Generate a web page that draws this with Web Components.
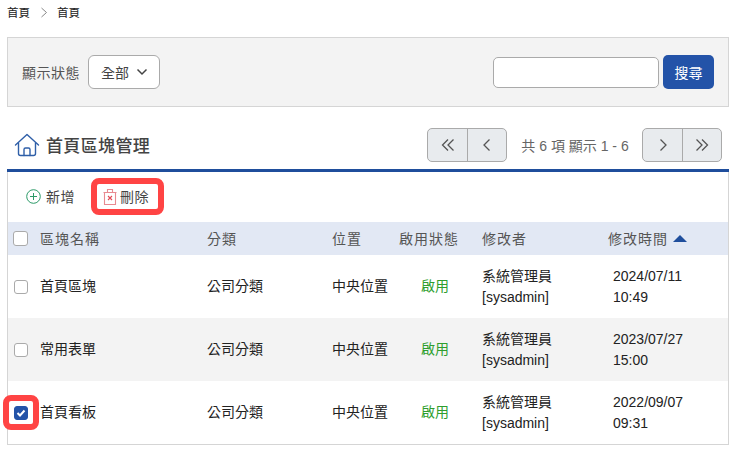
<!DOCTYPE html>
<html lang="zh-Hant">
<head>
<meta charset="utf-8">
<title>首頁區塊管理</title>
<style>
  body {
    margin: 0;
    padding: 0 6px 0 7px;
    background: #fff;
    color: #333;
    font-family: "Liberation Sans", "Noto Sans CJK TC", sans-serif;
    font-size: 14px;
  }
</style>
</head>
<body>
<bread-crumb></bread-crumb>
<filter-panel></filter-panel>
<title-bar></title-bar>
<block-table>
  <block-row name="首頁區塊" user="系統管理員" date="2024/07/11" time="10:49"></block-row>
  <block-row name="常用表單" user="系統管理員" date="2023/07/27" time="15:00" shaded></block-row>
  <block-row name="首頁看板" user="系統管理員" date="2022/09/07" time="09:31" checked></block-row>
</block-table>

<script>
class BreadCrumb extends HTMLElement {
  constructor() {
    super();
    this.attachShadow({ mode: 'open' }).innerHTML = `
      <style>
        :host { display: flex; align-items: center; height: 37px; padding-bottom: 13px; box-sizing: border-box; font-size: 11.5px; color: #222; }
        svg { margin: 0 9px 0 10px; }
      </style>
      <span>首頁</span>
      <svg width="8" height="11" viewBox="0 0 8 11" fill="none" stroke="#888" stroke-width="1"><path d="M1.5 1l5 4.5-5 4.5"/></svg>
      <span>首頁</span>`;
  }
}

class FilterPanel extends HTMLElement {
  constructor() {
    super();
    this.attachShadow({ mode: 'open' }).innerHTML = `
      <style>
        :host { display: flex; align-items: center; height: 70px; box-sizing: border-box; padding: 0 14px 0 14px; background: #f3f3f3; border: 1px solid #d5d5d5; }
        .label { color: #555; margin-right: 8px; letter-spacing: .5px; }
        .select { display: flex; align-items: center; width: 72px; height: 34px; box-sizing: border-box; padding-left: 12px; background: #fff; border: 1px solid #aaa; border-radius: 6px; color: #444; }
        .select svg { margin-left: 7px; }
        .input { width: 166px; height: 31px; box-sizing: border-box; margin-left: auto; background: #fff; border: 1px solid #aaa; border-radius: 5px; }
        .btn { display: flex; align-items: center; justify-content: center; width: 51px; height: 34px; margin-left: 4px; background: #2353a8; color: #fff; border-radius: 5px; }
      </style>
      <span class="label">顯示狀態</span>
      <div class="select"><span>全部</span>
        <svg width="12" height="8" viewBox="0 0 12 8" fill="none" stroke="#444" stroke-width="1.5"><path d="M1.5 1.5L6 6l4.5-4.5"/></svg>
      </div>
      <div class="input"></div>
      <div class="btn">搜尋</div>`;
  }
}

class PagerBar extends HTMLElement {
  constructor() {
    super();
    const chev = (d) => `<svg width="14" height="14" viewBox="0 0 14 14" fill="none" stroke="#555" stroke-width="1.3"><path d="${d}"/></svg>`;
    this.attachShadow({ mode: 'open' }).innerHTML = `
      <style>
        :host { display: flex; align-items: center; font-size: 14px; color: #666; }
        .group { display: flex; width: 80px; height: 34px; box-sizing: border-box; background: #e8ebee; border: 1px solid #aaa; border-radius: 5px; overflow: hidden; }
        .group div { display: flex; flex: 1; align-items: center; justify-content: center; }
        .group div:first-child { flex: none; width: 39px; }
        .group div + div { border-left: 1px solid #aaa; }
        .info { width: 134px; padding-left: 1px; text-align: center; }
      </style>
      <div class="group">
        <div>${chev('M7 1.5L1.5 7 7 12.5M12.5 1.5L7 7l5.5 5.5')}</div>
        <div>${chev('M9.5 1.5L4 7l5.5 5.5')}</div>
      </div>
      <span class="info">共 6 項 顯示 1 - 6</span>
      <div class="group">
        <div>${chev('M4.5 1.5L10 7l-5.5 5.5')}</div>
        <div>${chev('M1.5 1.5L7 7l-5.5 5.5M7 1.5L12.5 7 7 12.5')}</div>
      </div>`;
  }
}

class TitleBar extends HTMLElement {
  constructor() {
    super();
    this.attachShadow({ mode: 'open' }).innerHTML = `
      <style>
        :host { display: flex; align-items: center; height: 65px; box-sizing: border-box; padding: 13px 7px 0 7px; border-bottom: 3px solid #1f4e9c; }
        svg { margin-right: 6px; }
        h1 { margin: 0; font-size: 17px; font-weight: 500; color: #444; letter-spacing: .35px; }
        pager-bar { margin-left: auto; }
      </style>
      <svg width="26" height="24" viewBox="0 0 26 24" fill="none" stroke="#2f5fa8" stroke-width="1.4" stroke-linejoin="round" stroke-linecap="round">
        <path d="M1.5 12L13 1.5 24.5 12"/>
        <path d="M4.5 10v10.5a2 2 0 0 0 2 2h13a2 2 0 0 0 2-2V10"/>
        <path d="M10 22.5v-6a1.5 1.5 0 0 1 1.5-1.5h3a1.5 1.5 0 0 1 1.5 1.5v6"/>
      </svg>
      <h1>首頁區塊管理</h1>
      <pager-bar></pager-bar>`;
  }
}

class CheckMark extends HTMLElement {
  constructor() {
    super();
    this.attachShadow({ mode: 'open' }).innerHTML = `
      <style>
        :host { display: inline-flex; align-items: center; justify-content: center; width: 14px; height: 14px; box-sizing: border-box; background: #fff; border: 1px solid #aaa; border-radius: 3px; }
        :host([checked]) { background: #2353a8; border-color: #2353a8; }
        :host([large]) { width: 15px; height: 15px; }
        svg { display: none; }
        :host([checked]) svg { display: block; }
      </style>
      <svg width="10" height="8" viewBox="0 0 10 8" fill="none" stroke="#fff" stroke-width="2"><path d="M1.5 4l2.5 2.5 4.5-5"/></svg>`;
  }
}

class BlockTable extends HTMLElement {
  constructor() {
    super();
    this.attachShadow({ mode: 'open' }).innerHTML = `
      <style>
        :host { display: block; box-sizing: border-box; border: 1px solid #d5d5d5; border-top: 0; }
        .tools { display: flex; align-items: center; height: 50px; box-sizing: border-box; padding: 0 0 2px 18px; color: #444; font-size: 14px; letter-spacing: .5px; }
        .tool { display: flex; align-items: center; }
        .add svg { margin-right: 5px; }
        .del { position: relative; margin-left: 28px; }
        .del svg { margin-right: 3px; }
        .del::after { content: ""; position: absolute; left: -12px; right: -15px; top: -8px; bottom: -9px; border: 6px solid #ff4444; border-radius: 8px; }
        .head { display: grid; grid-template-columns: 32px 167px 125px 67px 83px 126px 1fr; align-items: center; height: 33px; padding-bottom: 1px; box-sizing: border-box; background: #e2e8f4; color: #555; font-size: 14px; letter-spacing: 1px; }
        .head check-mark { margin-left: 5px; }
        .sort { display: flex; align-items: center; white-space: nowrap; }
        .sort svg { margin-left: 5px; }
      </style>
      <div class="tools">
        <div class="tool add">
          <svg width="15" height="15" viewBox="0 0 15 15" fill="none" stroke="#2c9a68" stroke-width="1"><circle cx="7.5" cy="7.5" r="6.8"/><path d="M7.5 4v7M4 7.5h7"/></svg>
          <span>新增</span>
        </div>
        <div class="tool del">
          <svg width="14" height="17" viewBox="0 0 14 17" fill="none" stroke="#e88a90" stroke-width="1.1"><path d="M.5 4.5h13M4.5 4V1.5h5V4M1.5 4.5V16.5h11V4.5"/><path d="M5 8l4 4M9 8l-4 4" stroke="#e24a55"/></svg>
          <span>刪除</span>
        </div>
      </div>
      <div class="head">
        <check-mark large></check-mark>
        <span>區塊名稱</span><span>分類</span><span>位置</span><span>啟用狀態</span><span>修改者</span>
        <span class="sort">修改時間
          <svg width="14" height="7" viewBox="0 0 14 7" fill="#1f4e9c"><path d="M7 0l7 7H0z"/></svg>
        </span>
      </div>
      <slot></slot>`;
  }
}

class BlockRow extends HTMLElement {
  constructor() {
    super();
    const a = (n) => this.getAttribute(n);
    this.attachShadow({ mode: 'open' }).innerHTML = `
      <style>
        :host { display: grid; grid-template-columns: 32px 167px 125px 67px 83px 131px 1fr; align-items: center; height: 63px; color: #222; font-size: 14px; line-height: 21px; }
        :host([shaded]) { background: #f3f3f3; }
        .box { position: relative; display: flex; margin-left: 6px; width: 14px; }
        :host([checked]) .box::after { content: ""; position: absolute; left: -11px; right: -11px; top: -11px; bottom: -10px; border: 6px solid #ff4444; border-radius: 8px; }
        .state { color: #2e9e2e; padding-left: 22px; }
      </style>
      <div class="box"><check-mark ${this.hasAttribute('checked') ? 'checked' : ''}></check-mark></div>
      <span>${a('name')}</span>
      <span>公司分類</span>
      <span>中央位置</span>
      <span class="state">啟用</span>
      <div><div>${a('user')}</div><div>[sysadmin]</div></div>
      <div><div>${a('date')}</div><div>${a('time')}</div></div>`;
  }
}

customElements.define('check-mark', CheckMark);
customElements.define('bread-crumb', BreadCrumb);
customElements.define('filter-panel', FilterPanel);
customElements.define('pager-bar', PagerBar);
customElements.define('title-bar', TitleBar);
customElements.define('block-table', BlockTable);
customElements.define('block-row', BlockRow);
</script>
</body>
</html>
